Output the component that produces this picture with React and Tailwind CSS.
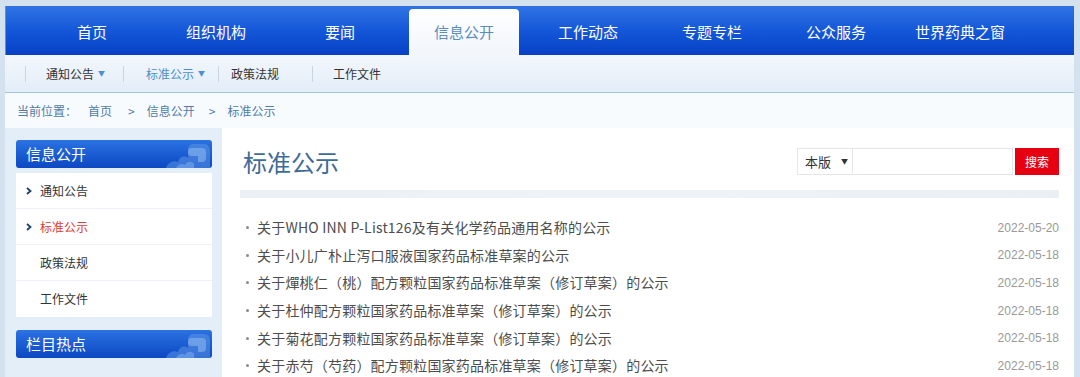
const navItems = ["首页", "组织机构", "要闻", "信息公开", "工作动态", "专题专栏", "公众服务", "世界药典之窗"];

const subItems = [
  { name: "通知公告", caret: true, ml: "ml-[20px]", mr: "mr-[18px]" },
  { name: "标准公示", caret: true, active: true, ml: "ml-[22px]", mr: "mr-[13px]" },
  { name: "政策法规", ml: "ml-[12px]", mr: "mr-[33px]" },
  { name: "工作文件", ml: "ml-[20px]", mr: "" },
];

const sideItems = [
  { name: "通知公告", arrow: true },
  { name: "标准公示", arrow: true, active: true },
  { name: "政策法规" },
  { name: "工作文件" },
];

const news = [
  ["关于WHO INN P-List126及有关化学药品通用名称的公示", "2022-05-20"],
  ["关于小儿广朴止泻口服液国家药品标准草案的公示", "2022-05-18"],
  ["关于燀桃仁（桃）配方颗粒国家药品标准草案（修订草案）的公示", "2022-05-18"],
  ["关于杜仲配方颗粒国家药品标准草案（修订草案）的公示", "2022-05-18"],
  ["关于菊花配方颗粒国家药品标准草案（修订草案）的公示", "2022-05-18"],
  ["关于赤芍（芍药）配方颗粒国家药品标准草案（修订草案）的公示", "2022-05-18"],
];

function Cloud() {
  return (
    <svg width="60" height="28" viewBox="0 0 60 28" className="absolute right-0 top-0">
      <path d="M14 28 C16 22 22 20 26 22 C27 17 32 15 36 18 L36 10 C36 5 40 3 44 4 L52 4 C56 4 58 7 58 11 L58 28 Z" fill="#5d95e6" opacity="0.55" />
      <path d="M40 8 h10 a4 4 0 0 1 4 4 v6 a4 4 0 0 1 -4 4 h-4 v-6 h-6 a4 4 0 0 1 0 -8 Z" fill="#8ab6f0" opacity="0.6" />
      <path d="M24 28 C26 24 30 23 33 25 C35 21 40 21 42 24 L42 28 Z" fill="#7aa9ee" opacity="0.6" />
    </svg>
  );
}

function SideHeader({ title }) {
  return (
    <div className="relative h-[28px] rounded-[3px] bg-gradient-to-b from-[#2b72e2] to-[#0c48c2] pl-[10px] flex items-center text-white text-[15px] overflow-hidden">
      {title}
      <Cloud />
    </div>
  );
}

export default function App() {
  return (
    <div
      className="w-[1080px] h-[377px] overflow-hidden bg-[#d3e2ee] pt-[6px] pl-[5px] pr-[6px]"
      style={{ fontFamily: '"Noto Sans CJK SC", "Noto Sans", sans-serif' }}
    >
      {/* top nav */}
      <div className="h-[49px] bg-gradient-to-b from-[#2f73e4] via-[#1457d8] to-[#0841c6] flex items-end pl-[24px] border-l border-[#5b8ee0]">
        {navItems.map((item) =>
          item === "信息公开" ? (
            <div key={item} className="w-[124px] h-full flex justify-center items-end">
              <div className="w-[110px] h-[46px] rounded-t-[4px] bg-gradient-to-b from-white to-[#f1f6fb] flex items-center justify-center text-[15px] text-[#5a8cbf]">
                {item}
              </div>
            </div>
          ) : (
            <div key={item} className="w-[124px] h-[46px] flex items-center justify-center text-[15px] text-white">
              {item}
            </div>
          )
        )}
      </div>

      {/* sub nav */}
      <div className="h-[38px] bg-gradient-to-b from-[#f3f7fc] to-[#e3edf8] border-b border-[#a6c3da] flex items-center pl-[20px] text-[12px]">
        {subItems.map((s) => (
          <div key={s.name} className="flex items-center">
            <div className="w-px h-[16px] bg-[#c9d6e2]" />
            <div className={`${s.ml} ${s.mr} flex items-center gap-[4px] ${s.active ? "text-[#4d8fcc]" : "text-[#333]"}`}>
              {s.name}
              {s.caret && <span className="text-[7px] text-[#4d8fcc]">▼</span>}
            </div>
          </div>
        ))}
      </div>

      {/* breadcrumb */}
      <div className="h-[35px] bg-[#f8fbfe] flex items-center pl-[12px] text-[12px] text-[#4f7ca8]">
        <span>当前位置：</span>
        <span className="ml-[11px]">首页</span>
        <span className="ml-[16px]">&gt;</span>
        <span className="ml-[12px]">信息公开</span>
        <span className="ml-[14px]">&gt;</span>
        <span className="ml-[12px]">标准公示</span>
      </div>

      {/* body */}
      <div className="flex h-[260px] bg-[#e3eef9]">
        <div className="w-[217px] pl-[11px] pr-[10px] pt-[12px]">
          <SideHeader title="信息公开" />
          <div className="mt-[5px] bg-white">
            {sideItems.map((s, i) => (
              <div
                key={s.name}
                className={`h-[36px] flex items-center pl-[10px] text-[12px] ${i < 3 ? "border-b border-[#eef2f6]" : ""} ${s.active ? "text-[#e03c31]" : "text-[#333]"}`}
              >
                <span className="w-[14px] flex items-center">
                  {s.arrow && (
                    <svg width="6" height="8" viewBox="0 0 6 8">
                      <path d="M1 1 L4.5 4 L1 7" fill="none" stroke="#1d3f70" strokeWidth="1.8" />
                    </svg>
                  )}
                </span>
                {s.name}
              </div>
            ))}
          </div>
          <div className="mt-[13px]">
            <SideHeader title="栏目热点" />
          </div>
        </div>

        <div className="flex-1 bg-white pl-[21px] pr-[15px]">
          <div className="pt-[20px] flex items-center justify-between">
            <div className="text-[24px] text-[#3e6b98] leading-none">标准公示</div>
            <div className="flex items-center h-[27px]">
              <div className="w-[56px] h-full border border-[#e6e6e6] flex items-center pl-[7px] gap-[10px] text-[13px] text-[#333]">
                本版<span className="text-[7px]">▼</span>
              </div>
              <div className="w-[160px] h-full border border-l-0 border-[#e6e6e6]" />
              <div className="ml-[2px] w-[44px] h-full bg-[#e50012] text-white text-[12px] flex items-center justify-center">
                搜索
              </div>
            </div>
          </div>
          <div className="mt-[15px] ml-[-3px] h-[8px] bg-gradient-to-r from-[#eaf0f6] via-[#eef3f8] to-[#e9eff5]" />
          <div className="mt-[16px]">
            {news.map(([t, d]) => (
              <div key={t} className="h-[27.6px] flex items-center justify-between">
                <div className="flex items-center text-[14px] tracking-[0.2px] text-[#4d4d4d]">
                  <span className="ml-[3px] mr-[8px] w-[3px] h-[3px] rounded-full bg-[#8a8a8a]" />
                  {t}
                </div>
                <div className="text-[12px] text-[#999]" style={{ fontFamily: '"Liberation Sans", Arial, sans-serif' }}>{d}</div>
              </div>
            ))}
          </div>
        </div>
      </div>
    </div>
  );
}
